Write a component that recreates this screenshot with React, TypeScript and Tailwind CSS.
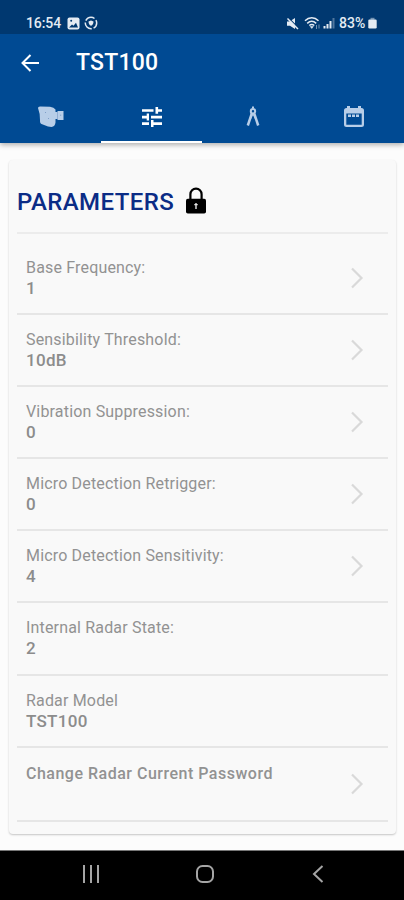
import { useState } from "react";

interface Parameter {
  label: string;
  value?: string;
  editable: boolean;
}

const parameters: Parameter[] = [
  { label: "Base Frequency:", value: "1", editable: true },
  { label: "Sensibility Threshold:", value: "10dB", editable: true },
  { label: "Vibration Suppression:", value: "0", editable: true },
  { label: "Micro Detection Retrigger:", value: "0", editable: true },
  { label: "Micro Detection Sensitivity:", value: "4", editable: true },
  { label: "Internal Radar State:", value: "2", editable: false },
  { label: "Radar Model", value: "TST100", editable: false },
];

const RadarIcon = () => (
  <svg width="28" height="24" viewBox="0 0 28 24" fill="currentColor">
    <path d="M1 3 Q1 1.500 3 1.500 L13 1.800 Q17 2.200 18.500 4.500 L18.500 17.500 Q18 21.500 14.500 22 L11 21.500 L4.500 19 Q2.800 18.500 3 15 Q3 8 1 3z" />
    <path d="M18 7h2.500V6h6v9h-6v-1H18z" />
    <path d="M8 7.500h1M11 13.500h1M23 10.200h1.200" stroke="#7f9fc8" strokeWidth="1" />
    <path d="M20.500 7v7" stroke="#7f9fc8" strokeWidth="0.700" />
  </svg>
);

const TuneIcon = () => (
  <svg width="24" height="24" viewBox="0 0 24 24" fill="currentColor">
    <path d="M2 17.300v2.600h7v-2.600zM2 4.200v2.600h11.500V4.200zM13.500 22v-2.100H22v-2.600h-8.500v-2.200H11V22zM6.700 8.600v2.200H2v2.600h4.700v2.200H9V8.600zM22 13.400v-2.600H11v2.600zM15.500 8.800h2.600V6.800H22V4.200h-3.900V2h-2.600z" />
  </svg>
);

const CompassIcon = () => (
  <svg width="24" height="24" viewBox="0 0 24 24" fill="none" stroke="currentColor">
    <path d="M12 1.500v2" strokeWidth="2" />
    <circle cx="12" cy="6.200" r="2.200" strokeWidth="2" />
    <path d="M10.800 8.500 6.800 20.500M13.200 8.500l4 12" strokeWidth="2.500" />
    <path d="m9.500 14 2.500-5 2.500 5" strokeWidth="1" />
  </svg>
);

const CalendarIcon = () => (
  <svg width="24" height="24" viewBox="0 0 24 24" fill="currentColor">
    <path fillRule="evenodd" d="M5 1h3v2h8V1h3v2h.500A2.500 2.500 0 0 1 22 5.500v14a2.500 2.500 0 0 1-2.500 2.500h-15A2.500 2.500 0 0 1 2 19.500v-14A2.500 2.500 0 0 1 4.500 3H5zM4.300 8.500v11.200h15.400V8.500z" />
    <path d="M6 9.500h3v2.500H6zM10 9.500h3v2.500h-3zM14 9.500h3v2.500h-3z" />
  </svg>
);

const tabs = [
  { id: "radar", icon: <RadarIcon /> },
  { id: "parameters", icon: <TuneIcon /> },
  { id: "measure", icon: <CompassIcon /> },
  { id: "schedule", icon: <CalendarIcon /> },
];

const StatusBar = () => (
  <div className="flex h-[34px] items-end justify-between bg-[#003870] pr-[27px] pb-1 pl-[26px] text-[#e4ebf3]">
    <div className="flex h-[14px] items-center">
      <span className="w-9 text-[14px] leading-[14px] font-medium tracking-[-0.1px]">16:54</span>
      <svg className="ml-[5px]" width="13" height="13" viewBox="0 0 13 13">
        <rect x="0.500" y="0.500" width="12" height="12" rx="2" fill="currentColor" />
        <path d="M2 10.500 5 7.500l1.500 1.300L9 5.800l2 4.700z" fill="#003870" />
        <circle cx="4.200" cy="3.800" r="1" fill="#003870" />
      </svg>
      <svg className="ml-1" width="14" height="14" viewBox="0 0 14 14" fill="none" stroke="currentColor">
        <circle cx="7" cy="7" r="5.700" strokeWidth="1.500" strokeDasharray="10 1.940" strokeDashoffset="4" />
        <path d="M4.500 5.500 7 4.500l2.500 1C9.500 8 8.500 9 7 9.800 5.500 9 4.500 8 4.500 5.500z" fill="currentColor" stroke="none" />
      </svg>
    </div>
    <div className="flex h-[14px] items-center">
      <svg className="mr-[1px]" width="13" height="13" viewBox="0 0 13 13" fill="currentColor">
        <path d="M1 4.500h2.500L9 1v11L4 8.800H1z" />
        <path d="m2.500.800 10 10" stroke="#003870" strokeWidth="1.200" />
        <path d="m1.500 1.500 10.500 10.500" stroke="currentColor" strokeWidth="1.500" />
      </svg>
      <svg className="ml-1" width="17" height="14" viewBox="0 0 17 14" fill="none" stroke="currentColor">
        <path d="M1 4.800c4-4 9.500-4 13.500 0M3.200 7.400c2.800-2.600 6.300-2.600 9 0M5.300 9.500c1.600-1.300 3.400-1.300 5 0" strokeWidth="1.500" />
        <path d="M6.200 10.500 7.800 12.500l1.600-2z" fill="currentColor" strokeWidth="0.500" />
        <path d="M12.500 9v4M15 8.500v4" strokeWidth="1" opacity="0.500" />
      </svg>
      <svg className="ml-[2px]" width="12" height="12" viewBox="0 0 12 12" fill="currentColor">
        <path d="M.500 9h2v2.500h-2zM3.500 7h2v4.500h-2zM6.500 4h2v7.500h-2z" />
        <path d="M9.500 1h2v10.500h-2z" opacity="0.350" />
      </svg>
      <span className="ml-1 w-[29px] text-[14px] leading-[14px] font-medium">83%</span>
      <svg width="9" height="12" viewBox="0 0 9 12" fill="currentColor">
        <path d="M2.500.800h4v2h-4z" opacity="0.500" />
        <rect x="0.300" y="2.500" width="8.400" height="9" rx="1.200" />
      </svg>
    </div>
  </div>
);

const LockIcon = () => (
  <svg width="22" height="28" viewBox="0 0 22 28">
    <path d="M5.400 13V7.200a5.600 5.600 0 0 1 11.200 0V13" fill="none" stroke="black" strokeWidth="2.200" />
    <rect x="1" y="11.800" width="20" height="14.700" rx="1.800" fill="black" />
    <path d="M11 16v6M9.300 17.600h3.400" stroke="#e5e5e5" strokeWidth="1.400" />
  </svg>
);

const Chevron = () => (
  <svg width="13" height="22" viewBox="0 0 13 22" fill="none" stroke="#d9d9d9" strokeWidth="2.200">
    <path d="m1 1.500 9.500 9.500L1 20.500" />
  </svg>
);

export default function App() {
  const [activeTab, setActiveTab] = useState("parameters");

  return (
    <div className="flex h-[900px] w-[404px] flex-col overflow-hidden bg-[#fcfcfc] font-['Roboto',sans-serif]">
      {/* Header */}
      <header className="z-10 h-[143px] shrink-0 bg-[#004a93] shadow-[0_2px_5px_rgba(0,0,0,0.3)]">
        <StatusBar />
        <div className="flex h-[57px] items-center pl-5 text-white">
          <svg width="20" height="20" viewBox="0 0 20 20" fill="none" stroke="currentColor" strokeWidth="2">
            <path d="M19 10H3M10.500 2 2.500 10l8 8" />
          </svg>
          <h1 className="ml-[36px] text-[23px] leading-7 font-medium tracking-[0.2px]">TST100</h1>
        </div>
        <nav className="grid h-[52px] grid-cols-4">
          {tabs.map((tab) => (
            <button
              key={tab.id}
              onClick={() => setActiveTab(tab.id)}
              className={
                tab.id === activeTab
                  ? "flex justify-center border-b-2 border-white pt-[14px] text-white"
                  : "flex justify-center border-b-2 border-transparent pt-[14px] text-[#b8cee8]"
              }
            >
              {tab.icon}
            </button>
          ))}
        </nav>
      </header>

      {/* Parameters card */}
      <main className="flex-1 pt-[17px] pr-2 pl-[9px]">
        <section className="h-[674px] rounded-[4px] bg-[#f9f9f9] px-2 shadow-[0_1px_2px_rgba(0,0,0,0.22)]">
          <div className="flex h-[74px] items-center border-b-2 border-[#ececec] pt-[10px]">
            <h2 className="w-[168px] pt-px text-[24px] leading-8 font-medium tracking-[0.4px] text-[#0b2c86]">PARAMETERS</h2>
            <LockIcon />
          </div>
          <div className="pt-[9px]">
            {parameters.map((param) => (
              <div key={param.label} className="flex h-[72.1px] justify-between border-b-2 border-[#e6e6e6] pr-6 pl-[9px]">
                <div className="pt-[15px] text-[16px] leading-5 text-[#929292]">
                  <p className="tracking-[0.17px]">{param.label}</p>
                  <p className="text-[17px] font-medium tracking-[0.3px] text-[#8c8c8c]">{param.value}</p>
                </div>
                {param.editable && (
                  <div className="pt-6">
                    <Chevron />
                  </div>
                )}
              </div>
            ))}
            <div className="flex h-[74px] justify-between border-b-2 border-[#e6e6e6] pr-6 pl-[9px]">
              <p className="pt-4 text-[16px] leading-5 font-medium tracking-[0.5px] text-[#929292]">Change Radar Current Password</p>
              <div className="pt-[25px]">
                <Chevron />
              </div>
            </div>
          </div>
        </section>
      </main>

      {/* Android navigation */}
      <footer className="flex h-[50px] shrink-0 items-center justify-between border-t border-[#777] bg-black pr-[80px] pb-[3px] pl-[82px] text-[#a5a5a5]">
        <svg width="18" height="18" viewBox="0 0 18 18" stroke="currentColor" strokeWidth="2">
          <path d="M2 0v18M9 0v18M16 0v18" />
        </svg>
        <svg className="mr-[3px]" width="18" height="18" viewBox="0 0 18 18" fill="none" stroke="currentColor" strokeWidth="2">
          <rect x="1" y="1" width="16" height="16" rx="5.500" />
        </svg>
        <svg width="12" height="18" viewBox="0 0 12 18" fill="none" stroke="currentColor" strokeWidth="2">
          <path d="m10.500 1-8.500 8 8.500 8" />
        </svg>
      </footer>
    </div>
  );
}
